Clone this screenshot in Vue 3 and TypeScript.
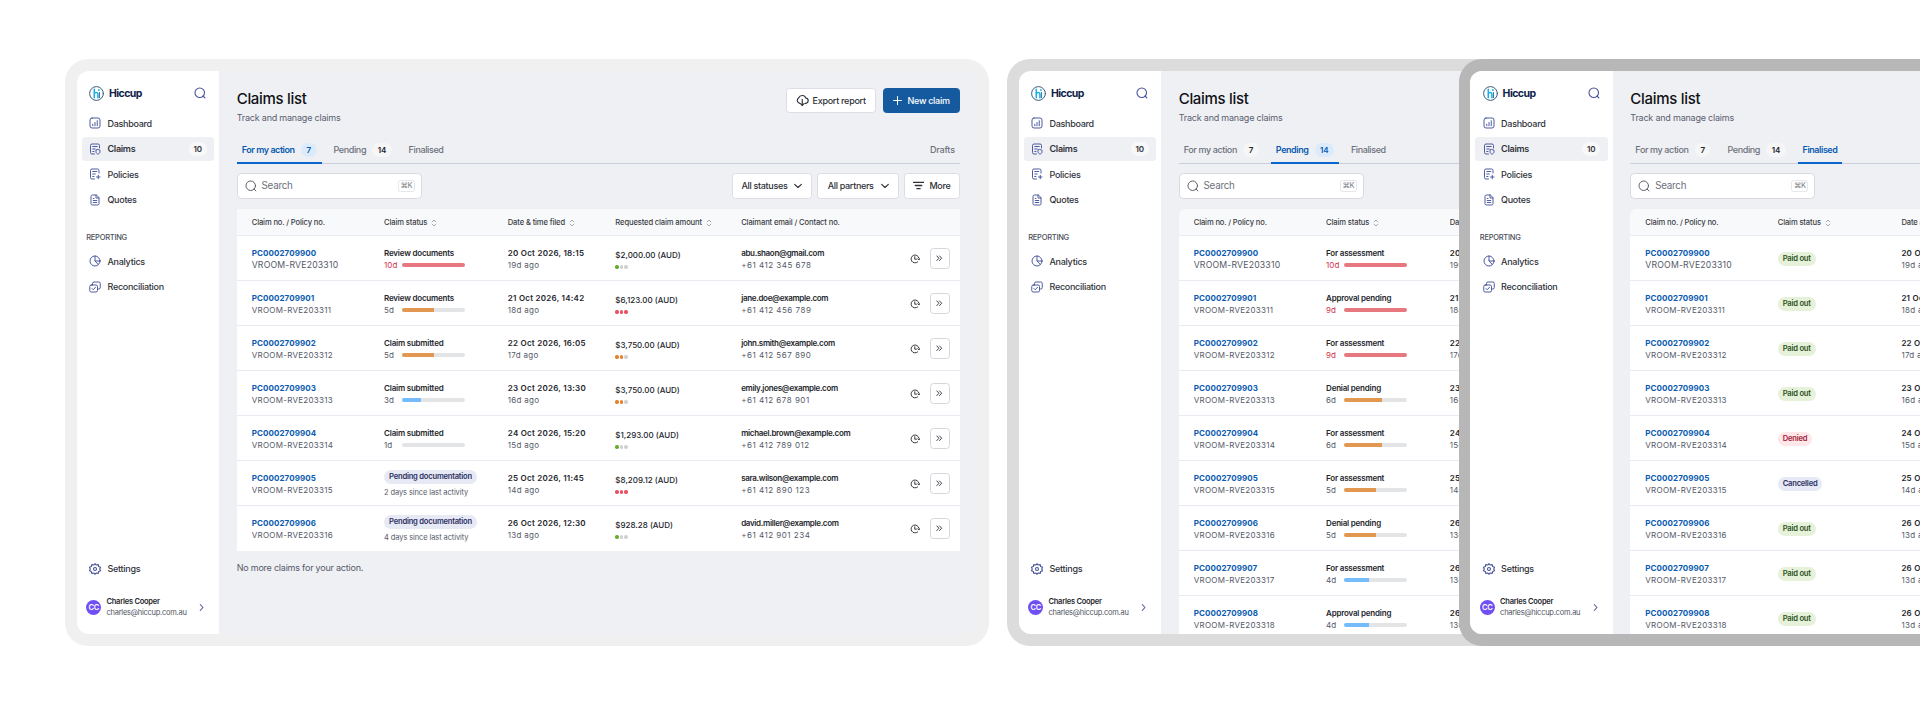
<script setup lang="ts">
import { h, type FunctionalComponent } from 'vue'

type Tone = 'red' | 'orange' | 'blue' | 'none'
type Pill = 'green' | 'rose' | 'navy'

interface Status {
  label: string
  days?: number
  tone?: Tone
  fill?: number
  pill?: Pill
  note?: string
}

interface Screen {
  id: string
  active: number
  full: boolean
  statuses: Status[]
}

const glyphs: Record<string, string[]> = {
  search: ['M18 18L21.800 21.800', 'M21 11.500a9.500 9.500 0 1 1-19 0a9.500 9.500 0 1 1 19 0z'],
  dashboard: ['M6 2h12a4 4 0 0 1 4 4v12a4 4 0 0 1-4 4H6a4 4 0 0 1-4-4V6a4 4 0 0 1 4-4z', 'M7.500 17.500v-3', 'M12 17.500v-6.500', 'M16.500 17.500v-10'],
  claims: ['M21 10V5a3 3 0 0 0-3-3H6a3 3 0 0 0-3 3v14a3 3 0 0 0 3 3h5', 'M7.500 7h9', 'M7.500 12h5', 'M7.500 17h2.500', 'M18 13l4 1.500v3c0 2.500-2 4-4 5c-2-1-4-2.500-4-5v-3z'],
  policies: ['M20 10V5a3 3 0 0 0-3-3H6a3 3 0 0 0-3 3v14a3 3 0 0 0 3 3h5', 'M7.500 7h8', 'M7.500 12h5', 'M7.500 17h2.500', 'M18.500 14.500v7', 'M15 18h7'],
  quotes: ['M14 2H7a3 3 0 0 0-3 3v14a3 3 0 0 0 3 3h10a3 3 0 0 0 3-3V8z', 'M14 2v6h6', 'M8.500 9h1.500', 'M8.500 13h7', 'M8.500 17h7'],
  analytics: ['M22 12a10 10 0 1 1-20 0a10 10 0 1 1 20 0z', 'M12 2v10h10', 'M12 12l6.500 7'],
  reconcile: ['M4.500 8h9.500a3 3 0 0 1 3 3v8a3 3 0 0 1-3 3H4.500a3 3 0 0 1-3-3v-8a3 3 0 0 1 3-3z', 'M7 8V5a3 3 0 0 1 3-3h9.500a3 3 0 0 1 3 3v8a3 3 0 0 1-3 3H17', 'M6 15l2.500 2.500l4.500-5'],
  settings: ['M12 1.500l2.600 2.600l3.900-.8l.9 3.800l3.600 1.500l-1.500 3.400l1.500 3.400l-3.600 1.500l-.9 3.800l-3.900-.8L12 22.500l-2.600-2.600l-3.900.8l-.9-3.800L1 15.400L2.500 12L1 8.600l3.600-1.500l.9-3.800l3.900.8z', 'M15 12a3 3 0 1 1-6 0a3 3 0 1 1 6 0z'],
  right: ['M8.500 4l7.500 8l-7.500 8'],
  down: ['M2 7l10 9.500l10-9.500'],
  plus: ['M12 1.500v21', 'M1.500 12h21'],
  cloud: ['M7.500 18A5.800 5.800 0 0 1 5 7.500A7.500 7.500 0 0 1 19 8a5 5 0 0 1-1.500 10', 'M12 10.500V22', 'M8.500 18.500L12 22l3.500-3.500'],
  filter: ['M1 5h22', 'M5 12h14', 'M8.500 19h7'],
  sort: ['M6.500 8.500l5.500-5.500l5.500 5.500', 'M6.500 15.500l5.500 5.500l5.500-5.500'],
  clock: ['M21.500 10A9.500 9.500 0 1 0 18.500 19', 'M11.500 6.500V12.500h4', 'M18.500 11.500l3 3l2-3.500'],
  double: ['M3 3.500l8 8.500l-8 8.500', 'M13 3.500l8 8.500l-8 8.500'],
}

const Glyph: FunctionalComponent<{ name: string; weight?: number }> = (props) =>
  h(
    'svg',
    { viewBox: '0 0 24 24', fill: 'none', stroke: 'currentColor', 'stroke-width': props.weight ?? 1.9, 'stroke-linecap': 'round', 'stroke-linejoin': 'round' },
    glyphs[props.name].map((d) => h('path', { d })),
  )
Glyph.props = ['name', 'weight']

const mainNav = [
  { icon: 'dashboard', label: 'Dashboard' },
  { icon: 'claims', label: 'Claims', count: 10 },
  { icon: 'policies', label: 'Policies' },
  { icon: 'quotes', label: 'Quotes' },
]
const reportNav = [
  { icon: 'analytics', label: 'Analytics' },
  { icon: 'reconcile', label: 'Reconciliation' },
]
const tabs = [
  { label: 'For my action', count: 7 },
  { label: 'Pending', count: 14 },
  { label: 'Finalised' },
]
const columns = [
  { label: 'Claim no. / Policy no.', sort: false },
  { label: 'Claim status', sort: true },
  { label: 'Date & time filed', sort: true },
  { label: 'Requested claim amount', sort: true },
  { label: 'Claimant email / Contact no.', sort: false },
]
const columnsFor = (screen: Screen) => (screen.full ? columns : columns.slice(0, 3))

const claims = [
  { date: '20 Oct 2026, 18:15', ago: 19, amount: '$2,000.00', risk: 1, email: 'abu.shaon@gmail.com', phone: '+61 412 345 678' },
  { date: '21 Oct 2026, 14:42', ago: 18, amount: '$6,123.00', risk: 3, email: 'jane.doe@example.com', phone: '+61 412 456 789' },
  { date: '22 Oct 2026, 16:05', ago: 17, amount: '$3,750.00', risk: 2, email: 'john.smith@example.com', phone: '+61 412 567 890' },
  { date: '23 Oct 2026, 13:30', ago: 16, amount: '$3,750.00', risk: 2, email: 'emily.jones@example.com', phone: '+61 412 678 901' },
  { date: '24 Oct 2026, 15:20', ago: 15, amount: '$1,293.00', risk: 1, email: 'michael.brown@example.com', phone: '+61 412 789 012' },
  { date: '25 Oct 2026, 11:45', ago: 14, amount: '$8,209.12', risk: 3, email: 'sara.wilson@example.com', phone: '+61 412 890 123' },
  { date: '26 Oct 2026, 12:30', ago: 13, amount: '$928.28', risk: 1, email: 'david.miller@example.com', phone: '+61 412 901 234' },
]
const claimAt = (i: number) => claims[Math.min(i, claims.length - 1)]

const step = (label: string, days: number, tone: Tone, fill: number): Status => ({ label, days, tone, fill })
const paid: Status = { label: 'Paid out', pill: 'green' }

const screens: Screen[] = [
  {
    id: 'action',
    active: 0,
    full: true,
    statuses: [
      step('Review documents', 10, 'red', 100),
      step('Review documents', 5, 'orange', 50),
      step('Claim submitted', 5, 'orange', 50),
      step('Claim submitted', 3, 'blue', 30),
      step('Claim submitted', 1, 'none', 0),
      { label: 'Pending documentation', pill: 'navy', note: '2 days since last activity' },
      { label: 'Pending documentation', pill: 'navy', note: '4 days since last activity' },
    ],
  },
  {
    id: 'pending',
    active: 1,
    full: false,
    statuses: [
      step('For assessment', 10, 'red', 100),
      step('Approval pending', 9, 'red', 100),
      step('For assessment', 9, 'red', 100),
      step('Denial pending', 6, 'orange', 60),
      step('For assessment', 6, 'orange', 60),
      step('For assessment', 5, 'orange', 50),
      step('Denial pending', 5, 'orange', 50),
      step('For assessment', 4, 'blue', 40),
      step('Approval pending', 4, 'blue', 40),
    ],
  },
  {
    id: 'finalised',
    active: 2,
    full: false,
    statuses: [paid, paid, paid, paid, { label: 'Denied', pill: 'rose' }, { label: 'Cancelled', pill: 'navy' }, paid, paid, paid],
  },
]
</script>

<template>
  <div class="stage">
    <section v-for="screen in screens" :key="screen.id" class="frame" :class="screen.id">
      <div class="window">
        <aside class="sidebar">
          <div class="brand">
            <svg class="logo" viewBox="0 0 30 30" fill="none" stroke-linecap="round">
              <circle cx="15" cy="15" r="13.800" stroke="#37536f" stroke-width="1.900" />
              <path d="M10.500 6.500v17M10.500 16q0-3.200 4-3.200q3.300 0 3.300 3.500v7" stroke="#19aee9" stroke-width="3" />
              <path d="M20.800 13v10.500" stroke="#1c6fa5" stroke-width="2" />
              <circle cx="19.800" cy="8" r="1.800" fill="#19aee9" />
            </svg>
            <span class="brand-name">Hiccup</span>
            <Glyph name="search" class="brand-search" :weight="2.200" />
          </div>
          <nav class="nav">
            <a v-for="item in mainNav" :key="item.label" class="nav-item" :class="{ current: item.count }">
              <Glyph :name="item.icon" class="nav-icon" />
              <span>{{ item.label }}</span>
              <span v-if="item.count" class="nav-count">{{ item.count }}</span>
            </a>
          </nav>
          <div class="nav-title">REPORTING</div>
          <nav class="nav">
            <a v-for="item in reportNav" :key="item.label" class="nav-item">
              <Glyph :name="item.icon" class="nav-icon" />
              <span>{{ item.label }}</span>
            </a>
          </nav>
          <a class="nav-item settings">
            <Glyph name="settings" class="nav-icon" :weight="2.200" />
            <span>Settings</span>
          </a>
          <div class="user">
            <span class="avatar">CC</span>
            <div class="user-text">
              <div class="user-name">Charles Cooper</div>
              <div class="user-mail">charles@hiccup.com.au</div>
            </div>
            <Glyph name="right" class="user-more" :weight="2.700" />
          </div>
        </aside>

        <main class="content">
          <header class="header">
            <div>
              <h1 class="title">Claims list</h1>
              <p class="subtitle">Track and manage claims</p>
            </div>
            <div v-if="screen.full" class="actions">
              <button class="btn export"><Glyph name="cloud" class="cloud" :weight="2.200" />Export report</button>
              <button class="btn primary"><Glyph name="plus" class="plus" :weight="2.700" />New claim</button>
            </div>
          </header>

          <div class="tabs">
            <div v-for="(tab, i) in tabs" :key="tab.label" class="tab" :class="{ active: i === screen.active }">
              <span class="tab-label">{{ tab.label }}</span>
              <span v-if="tab.count" class="tab-count">{{ tab.count }}</span>
            </div>
            <div v-if="screen.full" class="tab drafts">Drafts</div>
          </div>

          <div class="toolbar">
            <div class="search">
              <Glyph name="search" class="search-icon" />
              <span class="search-text">Search</span>
              <kbd class="kbd">⌘K</kbd>
            </div>
            <div v-if="screen.full" class="filters">
              <button class="btn statuses">All statuses<Glyph name="down" class="caret" :weight="3.400" /></button>
              <button class="btn partners">All partners<Glyph name="down" class="caret" :weight="3.400" /></button>
              <button class="btn more"><Glyph name="filter" class="lines" :weight="2.800" />More</button>
            </div>
          </div>

          <div class="table">
            <div class="row head">
              <div v-for="col in columnsFor(screen)" :key="col.label" class="head-cell">
                {{ col.label }}<Glyph v-if="col.sort" name="sort" class="sort" />
              </div>
            </div>
            <div v-for="(status, i) in screen.statuses" :key="i" class="row">
              <div>
                <div class="claim-no">PC000270990{{ i }}</div>
                <div class="policy">VROOM-RVE20331{{ i }}</div>
              </div>
              <div v-if="status.pill" class="pill-cell" :class="{ noted: status.note }">
                <span class="pill" :class="status.pill">{{ status.label }}</span>
                <div v-if="status.note" class="note">{{ status.note }}</div>
              </div>
              <div v-else>
                <div class="strong">{{ status.label }}</div>
                <div class="progress" :class="status.tone">
                  <span class="days">{{ status.days }}d</span>
                  <span class="track"><span class="fill" :style="{ width: status.fill + '%' }"></span></span>
                </div>
              </div>
              <div>
                <div class="strong date">{{ claimAt(i).date }}</div>
                <div class="muted">{{ claimAt(i).ago }}d ago</div>
              </div>
              <template v-if="screen.full">
                <div class="amount-cell">
                  <div class="amount">{{ claimAt(i).amount }} (AUD)</div>
                  <div class="dots" :class="'risk-' + claimAt(i).risk"><i></i><i></i><i></i></div>
                </div>
                <div>
                  <div class="strong email">{{ claimAt(i).email }}</div>
                  <div class="muted phone">{{ claimAt(i).phone }}</div>
                </div>
                <div class="row-actions">
                  <Glyph name="clock" class="clock" :weight="2.200" />
                  <button class="open"><Glyph name="double" class="double" :weight="3.600" /></button>
                </div>
              </template>
            </div>
          </div>
          <p v-if="screen.full" class="footnote">No more claims for your action.</p>
        </main>
      </div>
    </section>
  </div>
</template>

<style>
body {
  margin: 0;
  background: #fff;
}
</style>

<style scoped>
.stage {
  box-sizing: border-box;
  display: flex;
  align-items: flex-start;
  width: 1920px;
  height: 725px;
  padding: 59px 0 0 65px;
  overflow: hidden;
  background: #fff;
  font-family: Inter, 'Liberation Sans', sans-serif;
  font-size: 8px;
  color: #24262c;
}
.stage * {
  box-sizing: border-box;
}
.frame {
  flex: none;
  width: 924px;
  height: 586.600px;
  padding: 11.700px;
  border-radius: 23px;
  background: #f0f0f0;
}
.frame.pending {
  width: 490px;
  margin: 0 -38.400px 0 18px;
  padding-right: 0;
  border-radius: 23px 0 0 23px;
  background: #dcdcdc;
}
.frame.finalised {
  width: 462px;
  padding-right: 0;
  border-radius: 23px 0 0 23px;
  background: #b7b7b7;
}
.window {
  display: flex;
  height: 563.200px;
  border-radius: 12px;
  overflow: hidden;
  background: #eff0f4;
}
.pending .window,
.finalised .window {
  border-radius: 12px 0 0 12px;
}
svg {
  flex: none;
  display: block;
}
button {
  margin: 0;
  font-family: inherit;
}

.sidebar {
  flex: none;
  display: flex;
  flex-direction: column;
  width: 142.500px;
  padding: 5px 5px 11.500px;
  background: #fff;
}
.brand {
  display: flex;
  align-items: center;
  height: 35.600px;
  padding: 0 8px 0 7.300px;
}
.logo {
  width: 15px;
  height: 15px;
}
.brand-name {
  margin-left: 5px;
  font-size: 10.500px;
  font-weight: 700;
  letter-spacing: -0.550px;
  color: #0e2148;
}
.brand-search {
  width: 12px;
  height: 12px;
  margin-left: auto;
  color: #475499;
}
.nav {
  display: flex;
  flex-direction: column;
  gap: 1.500px;
}
.nav-item {
  display: flex;
  align-items: center;
  gap: 6.300px;
  height: 24px;
  padding: 0 7.500px;
  border-radius: 3.500px;
  font-size: 9px;
  font-weight: 500;
  letter-spacing: -0.280px;
  color: #30333a;
  white-space: nowrap;
}
.nav-item.current {
  background: #eff0f4;
  font-weight: 600;
}
.nav-icon {
  width: 12px;
  height: 12px;
  color: #47539a;
}
.nav-count {
  width: 18px;
  margin-left: auto;
  border-radius: 7px;
  background: #f8f8f9;
  font-size: 8px;
  font-weight: 600;
  line-height: 14px;
  letter-spacing: -0.100px;
  text-align: center;
}
.nav-title {
  height: 20px;
  margin: 16.400px 0 1px;
  padding-left: 4.500px;
  font-size: 7.500px;
  font-weight: 500;
  line-height: 20px;
  letter-spacing: -0.250px;
  color: #4a4f5c;
}
.settings {
  margin-top: auto;
}
.user {
  display: flex;
  align-items: center;
  height: 30px;
  margin-top: 11.500px;
  padding: 0 8px 0 4.500px;
}
.avatar {
  width: 15px;
  height: 15px;
  border-radius: 50%;
  background: #7050f5;
  font-size: 7.500px;
  font-weight: 600;
  line-height: 15px;
  letter-spacing: -0.300px;
  text-align: center;
  color: #fff;
}
.user-text {
  margin-left: 5.300px;
  line-height: 11.300px;
  letter-spacing: -0.250px;
  white-space: nowrap;
}
.user-name {
  font-size: 7.500px;
  font-weight: 600;
}
.user-mail {
  font-size: 7.500px;
  color: #4f5462;
}
.user-more {
  width: 9px;
  height: 9px;
  margin-left: auto;
  color: #47539a;
}

.content {
  flex: 1;
  min-width: 0;
  padding: 17.300px 17.500px 0 17.500px;
}
.pending .content,
.finalised .content {
  padding-right: 0;
}
.header {
  display: flex;
  justify-content: space-between;
  height: 49.500px;
}
.title {
  margin: 0;
  padding-top: 1px;
  font-size: 15px;
  font-weight: 500;
  line-height: 20px;
  letter-spacing: -0.300px;
  color: #101114;
}
.subtitle {
  margin: 2px 0 0;
  font-size: 9px;
  line-height: 13px;
  letter-spacing: -0.210px;
  color: #5b6070;
}
.actions,
.filters {
  display: flex;
  gap: 7.300px;
}
.filters {
  gap: 5.300px;
}
.btn {
  display: flex;
  align-items: center;
  justify-content: center;
  height: 25.300px;
  padding: 0;
  border: 1px solid #dddee5;
  border-radius: 3.500px;
  background: #fff;
  font-size: 9px;
  font-weight: 500;
  letter-spacing: -0.280px;
  color: #2d3036;
  white-space: nowrap;
}
.export {
  width: 89.300px;
  gap: 4px;
}
.primary {
  width: 77px;
  gap: 5.500px;
  border-color: #155a9f;
  background: #155a9f;
  color: #fff;
}
.statuses {
  width: 80.300px;
  gap: 7px;
}
.partners {
  width: 81.500px;
  gap: 7px;
}
.statuses,
.partners {
  letter-spacing: -0.330px;
}
.more {
  width: 55.600px;
  gap: 5px;
}
.cloud {
  width: 12.500px;
  height: 12.500px;
}
.plus {
  width: 9px;
  height: 9px;
}
.caret {
  width: 8px;
  height: 8px;
}
.lines {
  width: 11px;
  height: 11px;
}

.tabs {
  display: flex;
  gap: 7px;
  height: 26.200px;
  border-bottom: 1px solid #c9cde0;
}
.tab {
  display: flex;
  align-items: center;
  gap: 6.400px;
  height: 26.200px;
  padding: 0 5px;
  border-bottom: 2px solid transparent;
  font-size: 9px;
  font-weight: 500;
  letter-spacing: -0.380px;
  color: #6c707b;
  white-space: nowrap;
}
.tab.active {
  border-color: #0a66cc;
  font-weight: 600;
  letter-spacing: -0.450px;
  color: #0a5bb0;
}
.tab-count {
  min-width: 15.500px;
  padding: 0 5.200px;
  border-radius: 7px;
  background: #f6f6f7;
  font-size: 8px;
  font-weight: 600;
  line-height: 14px;
  letter-spacing: 0;
  text-align: center;
  color: #24262c;
}
.active .tab-count {
  background: #dcebfc;
  color: #0a5bb0;
}
.drafts {
  margin-left: auto;
  letter-spacing: -0.200px;
}

.toolbar {
  display: flex;
  justify-content: space-between;
  margin: 9.600px 0 10.100px;
}
.search {
  display: flex;
  align-items: center;
  width: 185px;
  height: 25.300px;
  padding: 0 6px 0 7px;
  border: 1px solid #d8dae0;
  border-radius: 4.500px;
  background: #fff;
}
.search-icon {
  width: 12px;
  height: 12px;
  color: #55585f;
}
.search-text {
  margin-left: 4.900px;
  font-size: 9.800px;
  letter-spacing: -0.250px;
  color: #6c707b;
}
.kbd {
  width: 17px;
  height: 12.500px;
  margin-left: auto;
  border: 1px solid #e6e7ec;
  border-radius: 2.500px;
  font-family: Inter, 'DejaVu Sans', sans-serif;
  font-size: 7.500px;
  line-height: 10.500px;
  letter-spacing: -0.500px;
  text-align: center;
  color: #777b84;
}

.table {
  overflow: hidden;
}
.pending .table,
.finalised .table {
  border-radius: 6px 0 0 0;
}
.row {
  display: grid;
  grid-template-columns: 132.400px 123.700px 107.600px 125.800px 1fr auto;
  height: 45px;
  padding: 11.200px 10px 0 15px;
  border-bottom: 1.300px solid #e9ebf3;
  background: #fff;
  line-height: 12.300px;
  white-space: nowrap;
}
.row:last-child {
  border-bottom: 0;
}
.row.head {
  height: 27px;
  padding-top: 8.300px;
  background: #f8f9fb;
}
.head-cell {
  display: flex;
  align-items: center;
  height: 12px;
  font-size: 7.600px;
  font-weight: 500;
  letter-spacing: -0.130px;
  color: #3a3d45;
}
.sort {
  width: 8px;
  height: 8px;
  margin-left: 3px;
  color: #777b84;
}
.claim-no {
  font-weight: 700;
  letter-spacing: 0.090px;
  color: #0a5bb0;
}
.policy {
  letter-spacing: 0.280px;
  color: #555a68;
}
.row:nth-child(2) .policy {
  font-size: 8.700px;
  letter-spacing: 0.180px;
}
.strong {
  font-weight: 600;
  letter-spacing: -0.210px;
}
.date {
  letter-spacing: 0.250px;
}
.email {
  letter-spacing: -0.320px;
}
.muted,
.note {
  letter-spacing: 0.300px;
  color: #555a68;
}
.phone {
  letter-spacing: 0.500px;
}
.progress {
  display: flex;
  align-items: center;
  color: #555a68;
}
.progress.red {
  color: #d3304a;
}
.days {
  width: 18.300px;
}
.track {
  width: 62.500px;
  height: 4px;
  margin-top: -1.200px;
  border-radius: 2px;
  background: #e3e4e6;
  overflow: hidden;
}
.fill {
  display: block;
  height: 100%;
}
.red .fill {
  background: #e77880;
}
.orange .fill {
  background: #e29850;
}
.blue .fill {
  background: #74bcfb;
}
.pill-cell {
  padding-top: 5.300px;
}
.pill-cell.noted {
  padding-top: 0;
  margin-top: -1.500px;
}
.pill {
  display: block;
  width: fit-content;
  padding: 0 5px;
  border-radius: 7px;
  font-size: 7.600px;
  font-weight: 600;
  line-height: 13.800px;
  letter-spacing: -0.220px;
}
.pill.green {
  background: #e6f1da;
  color: #2c511b;
}
.pill.rose {
  background: #fde7e9;
  color: #a3203a;
}
.pill.navy {
  background: #e7e9f4;
  color: #2b2f63;
}
.note {
  margin-top: 2.500px;
  font-size: 7.500px;
  letter-spacing: -0.110px;
}
.amount-cell {
  padding-top: 2px;
}
.amount {
  font-weight: 500;
}
.dots {
  display: flex;
  gap: 1.200px;
  margin-top: 4.100px;
}
.dots i {
  width: 3.300px;
  height: 3.300px;
  border-radius: 50%;
  background: #cfd1d6;
}
.risk-1 i:first-child {
  background: #69ad2d;
}
.risk-2 i:nth-child(-n + 2) {
  background: #e5812a;
}
.risk-3 i {
  background: #ea5263;
}
.row-actions {
  display: flex;
  align-items: center;
  gap: 10px;
  height: 23.500px;
}
.clock {
  width: 10px;
  height: 10px;
}
.open {
  display: flex;
  align-items: center;
  justify-content: center;
  width: 20.300px;
  height: 21px;
  padding: 0;
  border: 1px solid #d5d7dd;
  border-radius: 3.500px;
  background: #fff;
  color: #3a3d45;
}
.double {
  width: 6.500px;
  height: 6.500px;
}
.footnote {
  margin: 10.800px 0 0;
  font-size: 9px;
  line-height: 13px;
  letter-spacing: -0.220px;
  color: #555a68;
}
</style>
